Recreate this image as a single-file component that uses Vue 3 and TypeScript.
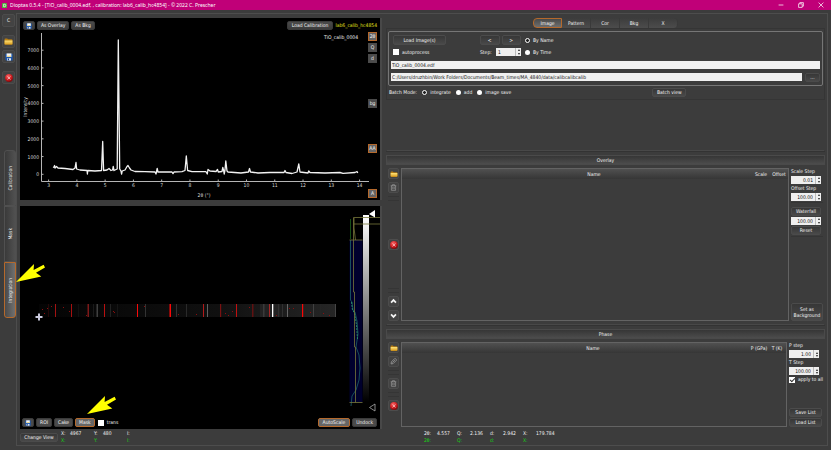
<script setup lang="ts">
import { ref } from 'vue'

const sideTabs = ['Calibration', 'Mask', 'Integration']
const activeSide = ref('Integration')
const tabs = ['Image', 'Pattern', 'Cor', 'Bkg', 'X']
const activeTab = ref('Image')
const unit = ref('2θ')
const navigation = ref('name')
const batchMode = ref('integrate')
const autoprocess = ref(false)
const transparent = ref(false)
const applyToAll = ref(true)
const imageStep = ref('1')
const fileName = ref('TiO_calib_0004.edf')
const folder = ref('C:/Users/druzhbin/Work Folders/Documents/Beam_times/MA_4840/data/calibcalibcalib')
const scaleStep = ref('0.01')
const offsetStep = ref('100.00')
const waterfall = ref('100.00')
const pressureStep = ref('1.00')
const temperatureStep = ref('100.00')

const yTicks = [0, 1000, 2000, 3000, 4000, 5000, 6000, 7000].map((value) => ({
  value,
  y: 156.3 - value * 0.01773,
}))
const xTicks = Array.from({ length: 12 }, (_, i) => ({ value: i + 3, x: 28.6 + i * 28.27 }))

const pattern =
  '33,149.5 34,149 34.6,147.5 35,150 36.5,148.5 38,150 45,150.5 53,151.5 55,150 56,144.5 56.6,151 60,152 67,152.5 67.4,156 67.8,152.5 75,153 81.5,152.5 82.7,123.5 83.6,152.5 87,152 89,150.5 91,152.5 92.6,152 93.2,148.5 94,152.5 97.2,151 98.3,22 99.7,151 101,153 101.6,156 102.2,153 105,152 107,148.5 108,147.5 109.5,150 111,152 115,153.5 125,153.7 135,154 136,156 137.2,150.5 138,154 152,154 153,155.6 154,154 162,153.6 165,152.5 166.3,138 167.6,152.5 172,153.7 186,153.7 187.3,156 188,151.5 190,153 196,153.5 197.5,151.5 198.3,154 202,153.5 202.8,149.5 203.6,152.5 204.2,156 205,152 205.8,143 207,153 208,154 221,155 228.5,154 229.5,150.5 230.5,154 238,155 250,154.5 264,154.5 265,152.5 266,154.5 272,155.5 277,154 278.8,146 280,154 288,155 288.7,153 290,154.5 305,155 320,154.5 323,155.3 335,154.5 337,153.5 337.8,155'

const strip = [
  { x: 28, w: 1, c: '#250808' }, { x: 35, w: 1, c: '#a31212' }, { x: 51, w: 1, c: '#a80f0f' },
  { x: 58, w: 1, c: '#101010' }, { x: 67.5, w: 1.5, c: '#7d1919' }, { x: 73, w: 1, c: '#1a1a1a' },
  { x: 76.5, w: 1.5, c: '#404040' }, { x: 84, w: 1, c: '#b91010' }, { x: 90, w: 1, c: '#222' },
  { x: 97, w: 1, c: '#151515' }, { x: 117, w: 1, c: '#f80a0a' }, { x: 125, w: 1, c: '#333' },
  { x: 149.5, w: 1.5, c: '#fb0707' }, { x: 156, w: 1, c: '#303030' }, { x: 166, w: 1, c: '#2a2a2a' },
  { x: 183, w: 1, c: '#b31919' }, { x: 187, w: 1, c: '#606060' }, { x: 200, w: 1.2, c: '#7a1111' },
  { x: 216, w: 1, c: '#c21010' }, { x: 232, w: 1.5, c: '#601111' }, { x: 243, w: 1.5, c: '#3a3a3a' },
  { x: 249, w: 1, c: '#a32525' }, { x: 252, w: 1.3, c: '#fff' }, { x: 258, w: 1, c: '#303030' },
  { x: 262, w: 1, c: '#303030' }, { x: 267, w: 1, c: '#666' }, { x: 282, w: 1.2, c: '#fb0505' },
  { x: 293, w: 1, c: '#414141' }, { x: 300, w: 1, c: '#252525' }, { x: 315, w: 1, c: '#454545' },
]
const speckles = [
  [22, 103], [24, 107], [27, 102], [31, 100], [43, 101], [49, 105], [66, 109], [94, 106], [93, 105],
  [124, 100], [158, 108], [176, 108], [205, 107], [208, 109], [212, 105], [229, 101], [269, 102],
  [273, 102], [290, 106], [303, 107], [309, 109], [256, 109],
]

const status = [
  { key: 'X:', value: '4967' },
  { key: 'Y:', value: '480' },
  { key: 'I:', value: '' },
]
const readouts = [
  { key: '2θ:', value: '4.557' },
  { key: 'Q:', value: '2.136' },
  { key: 'd:', value: '2.942' },
  { key: 'X:', value: '179.784' },
]
</script>

<template>
  <svg class="defs" width="0" height="0" aria-hidden="true">
    <defs>
      <linearGradient id="gold" x1="0" y1="0" x2="0" y2="1">
        <stop offset="0" stop-color="#ffe37a" /><stop offset="1" stop-color="#d99c1c" />
      </linearGradient>
      <radialGradient id="ruby" cx=".4" cy=".3" r=".75">
        <stop offset="0" stop-color="#ff6a6a" /><stop offset=".6" stop-color="#c81a1e" /><stop offset="1" stop-color="#6d0508" />
      </radialGradient>
      <symbol id="i-folder" viewBox="0 0 20 16">
        <path d="M1 3q0-2 2-2h4l2 2h8q2 0 2 2v8q0 2-2 2H3q-2 0-2-2z" fill="#b67d13" />
        <path d="M1 5.500h18V13q0 2-2 2H3q-2 0-2-2z" fill="url(#gold)" />
      </symbol>
      <symbol id="i-save" viewBox="0 0 20 20">
        <path d="M1 2h18v17H3l-2-2z" fill="#1c56ae" />
        <path d="M4 1h12v9H4z" fill="#f5f5f2" />
        <path d="M5 7h10v2H5z" fill="#e5c24a" />
        <path d="M5 13h10v6H5z" fill="#dbe4f0" />
        <path d="M7 14h3v4H7z" fill="#123a7b" />
      </symbol>
      <symbol id="i-close" viewBox="0 0 20 20">
        <circle cx="10" cy="10" r="9.800" fill="url(#ruby)" />
        <path d="M7 7l6 6M13 7l-6 6" stroke="#f0b4b4" stroke-width="2.200" stroke-linecap="round" />
      </symbol>
      <symbol id="i-trash" viewBox="0 0 20 20">
        <g fill="none" stroke="#9b9b9b" stroke-width="2">
          <path d="M2 5h16M7 5V2h6v3M4 5v13h12V5" /><path d="M8 8v7M12 8v7" />
        </g>
      </symbol>
      <symbol id="i-edit" viewBox="0 0 20 20">
        <g fill="none" stroke="#a6a6a6" stroke-width="2">
          <path d="M3 17l1-6L13 2q2-1 4 1t1 4l-9 9z" /><path d="M7 13l7-7" />
        </g>
      </symbol>
      <symbol id="i-up" viewBox="0 0 20 20"><path d="M3 13l7-7 7 7" fill="none" stroke="#f4f4f4" stroke-width="5" /></symbol>
      <symbol id="i-down" viewBox="0 0 20 20"><path d="M3 7l7 7 7-7" fill="none" stroke="#f4f4f4" stroke-width="5" /></symbol>
      <symbol id="i-arrow" viewBox="0 0 29 19">
        <path d="M0 18L18 0l-.400 6L27.600.700 29 3.400 20 8.700l5.300 3.700z" fill="#ff0" />
      </symbol>
    </defs>
  </svg>

  <div class="window">
    <header class="titlebar">
      <svg class="logo" viewBox="0 0 12 12"><rect width="12" height="12" rx="1" fill="#4fae3c" /><path d="M4 3h2q3 0 3 3t-3 3H4z" fill="none" stroke="#fff" stroke-width="1.800" /></svg>
      <h1>Dioptas 0.5.4 - [TiO_calib_0004.edf, , calibration: lab6_calib_hc4854] - © 2022 C. Prescher</h1>
      <div class="caption">
        <button aria-label="Minimize"><svg viewBox="0 0 10 10"><path d="M1 5h8" /></svg></button>
        <button aria-label="Restore"><svg viewBox="0 0 10 10"><path d="M1 3h6v6H1zM3 3V1h6v6H7" /></svg></button>
        <button aria-label="Close"><svg viewBox="0 0 10 10"><path d="M1 1l8 8M9 1L1 9" /></svg></button>
      </div>
    </header>

    <div class="body">
      <aside class="sidebar">
        <button class="tool">C</button>
        <div class="tool-group">
          <button class="tool" aria-label="Open"><svg class="ico wide"><use href="#i-folder" /></svg></button>
          <button class="tool" aria-label="Save"><svg class="ico"><use href="#i-save" /></svg></button>
        </div>
        <button class="tool" aria-label="Reset"><svg class="ico"><use href="#i-close" /></svg></button>
        <nav class="side-tabs">
          <button v-for="tab in sideTabs" :key="tab" :class="{ active: activeSide === tab }" @click="activeSide = tab">
            <span>{{ tab }}</span>
            <svg v-if="tab === 'Integration'" class="arrow"><use href="#i-arrow" /></svg>
          </button>
        </nav>
      </aside>

      <main class="frame">
        <div class="left">
          <section class="view pattern-view">
            <svg class="canvas" viewBox="0 0 360 182">
              <g stroke="#b5b5b5" stroke-width="1">
                <path d="M21.500 15V163.500H349" fill="none" />
                <path v-for="t in yTicks" :key="t.value" :d="`M21.500 ${t.y}h2`" />
                <path v-for="t in xTicks" :key="t.value" :d="`M${t.x} 163.500v-2`" />
              </g>
              <g class="axis">
                <text v-for="t in yTicks" :key="t.value" x="19" :y="t.y + 2" text-anchor="end">{{ t.value }}</text>
                <text v-for="t in xTicks" :key="t.value" :x="t.x" y="169" text-anchor="middle">{{ t.value }}</text>
                <text x="184" y="179" text-anchor="middle">2θ (°)</text>
                <text transform="translate(7 89) rotate(-90)" text-anchor="middle">Intensity</text>
                <text class="bright" x="338" y="21" text-anchor="end">TiO_calib_0004</text>
              </g>
              <polyline :points="pattern" fill="none" stroke="#f2f2f2" stroke-width="1.300" stroke-linejoin="round" />
            </svg>
            <div class="overlay">
              <div class="bar">
                <button class="btn icon" aria-label="Save pattern"><svg class="ico small"><use href="#i-save" /></svg></button>
                <button class="btn">As Overlay</button>
                <button class="btn">As Bkg</button>
                <span class="grow"></span>
                <button class="btn roomy">Load Calibration</button>
                <span class="calibration">lab6_calib_hc4854</span>
              </div>
              <div class="units">
                <button v-for="u in ['2θ', 'Q', 'd']" :key="u" class="unit" :class="{ on: unit === u }" @click="unit = u">{{ u }}</button>
                <span class="grow"></span>
                <button class="unit">bg</button>
                <span class="grow"></span>
                <button class="unit on">AA</button>
                <span class="grow"></span>
                <button class="unit on">A</button>
              </div>
            </div>
          </section>

          <section class="view image-view">
            <svg class="canvas" viewBox="0 0 360 223">
              <defs>
                <linearGradient id="levels" x1="0" y1="0" x2="0" y2="1"><stop offset="0" stop-color="#fff" /><stop offset="1" stop-color="#000" /></linearGradient>
                <linearGradient id="haze"><stop offset="0" stop-color="#040404" /><stop offset=".6" stop-color="#101010" /><stop offset="1" stop-color="#262626" /></linearGradient>
              </defs>
              <rect x="19" y="98" width="297" height="13" fill="url(#haze)" />
              <rect x="240" y="98" width="20" height="13" fill="#222" />
              <rect v-for="s in strip" :key="s.x" :x="s.x" y="98" :width="s.w" height="13" :fill="s.c" />
              <rect v-for="[x, y] in speckles" :key="`${x}-${y}`" :x="x" :y="y" width="1" height="1" fill="#8c0d0d" />
              <path d="M19 107.500v7M15.500 111h7" stroke="#c9c9dc" stroke-width="2" />
              <rect x="329.500" y="34" width="13" height="162.500" fill="#00002d" />
              <rect x="343" y="9" width="6" height="187" fill="url(#levels)" />
              <g fill="none">
                <path d="M330.500 13v20" stroke="#164f16" />
                <path d="M330.500 34v60l1.500 2 1 8 2 2 2 9 1 13-2 13 3 8 1 13-1 12-3 10-4 6-1 10" stroke="#174e5b" />
                <path d="M331.500 96l1 8 2 3 2 12 1 14" stroke="#288a67" stroke-dasharray="2 1" />
                <path d="M333.500 86V11.500H360M333.500 18H360M333.500 86h1v55h1v55.500M334 12v10l1.500 12M329.500 34h13M329.500 196.500h13" stroke="#77773a" stroke-width=".8" />
              </g>
              <path d="M349 8l6-4v7.500z" fill="#fff" />
              <path d="M349.500 201.500l5.500-3.500v7z" fill="none" stroke="#aaa" stroke-width=".8" />
            </svg>
            <div class="overlay bottom">
              <div class="bar">
                <button class="btn icon" aria-label="Save image"><svg class="ico small"><use href="#i-save" /></svg></button>
                <button class="btn">ROI</button>
                <button class="btn">Cake</button>
                <button class="btn on">Mask<svg class="arrow"><use href="#i-arrow" /></svg></button>
                <label class="choice"><input v-model="transparent" type="checkbox" />trans</label>
                <span class="grow"></span>
                <button class="btn on roomy">AutoScale</button>
                <button class="btn">Undock</button>
              </div>
            </div>
          </section>
        </div>

        <div class="right">
          <section class="control">
            <nav class="tabs">
              <button v-for="tab in tabs" :key="tab" :class="{ active: activeTab === tab }" @click="activeTab = tab">{{ tab }}</button>
            </nav>
            <div class="pane">
              <div class="group">
                <div class="loader">
                  <div class="stack">
                    <button class="dark load">Load Image(s)</button>
                    <label class="choice"><input v-model="autoprocess" type="checkbox" />autoprocess</label>
                  </div>
                  <div class="stack step">
                    <div class="pair"><button class="dark">&lt;</button><button class="dark">&gt;</button></div>
                    <div class="pair">
                      <label for="image-step">Step:</label>
                      <span class="spin"><input id="image-step" v-model="imageStep" class="start" /><i class="steps"></i></span>
                    </div>
                  </div>
                  <div class="stack">
                    <label class="choice"><input v-model="navigation" type="radio" value="name" />By Name</label>
                    <label class="choice"><input v-model="navigation" type="radio" value="time" />By Time</label>
                  </div>
                </div>
                <input v-model="fileName" class="field" aria-label="File name" />
                <div class="path">
                  <input v-model="folder" class="field" aria-label="Folder" />
                  <button class="dark more">...</button>
                </div>
              </div>
              <div class="batch">
                <span>Batch Mode:</span>
                <label class="choice"><input v-model="batchMode" type="radio" value="integrate" />integrate</label>
                <label class="choice"><input v-model="batchMode" type="radio" value="add" />add</label>
                <label class="choice"><input v-model="batchMode" type="radio" value="save" />image save</label>
                <button class="dark view-btn">Batch view</button>
              </div>
            </div>
          </section>

          <section class="list overlay-list">
            <h2>Overlay</h2>
            <div class="content">
              <div class="tools">
                <button class="tool" aria-label="Add overlay"><svg class="ico wide"><use href="#i-folder" /></svg></button>
                <button class="tool" aria-label="Delete overlay"><svg class="ico small"><use href="#i-trash" /></svg></button>
                <hr /><span class="grow"></span>
                <button class="tool" aria-label="Clear overlays"><svg class="ico"><use href="#i-close" /></svg></button>
                <span class="grow"></span><hr />
                <button class="tool" aria-label="Move up"><svg class="ico small"><use href="#i-up" /></svg></button>
                <button class="tool" aria-label="Move down"><svg class="ico small"><use href="#i-down" /></svg></button>
              </div>
              <div class="sheet">
                <table><thead><tr><th class="mark"></th><th>Name</th><th class="num">Scale</th><th class="num">Offset</th></tr></thead></table>
              </div>
              <div class="options">
                <label for="scale-step">Scale Step</label>
                <span class="spin"><input id="scale-step" v-model="scaleStep" /><i class="steps"></i></span>
                <label for="offset-step">Offset Step</label>
                <span class="spin"><input id="offset-step" v-model="offsetStep" /><i class="steps"></i></span>
                <hr />
                <button class="dark">Waterfall</button>
                <span class="spin"><input v-model="waterfall" aria-label="Waterfall" /><i class="steps"></i></span>
                <button class="dark">Reset</button>
                <hr />
                <span class="grow"></span>
                <button class="dark tall">Set as<br />Background</button>
              </div>
            </div>
          </section>

          <section class="list phase-list">
            <h2>Phase</h2>
            <div class="content">
              <div class="tools">
                <button class="tool" aria-label="Add phase"><svg class="ico wide"><use href="#i-folder" /></svg></button>
                <button class="tool" aria-label="Edit phase"><svg class="ico small"><use href="#i-edit" /></svg></button>
                <hr />
                <button class="tool" aria-label="Delete phase"><svg class="ico small"><use href="#i-trash" /></svg></button>
                <hr />
                <button class="tool" aria-label="Clear phases"><svg class="ico"><use href="#i-close" /></svg></button>
              </div>
              <div class="sheet">
                <table><thead><tr><th class="mark"></th><th>Name</th><th class="num">P (GPa)</th><th class="num">T (K)</th></tr></thead></table>
              </div>
              <div class="options">
                <label for="p-step">P step</label>
                <span class="spin"><input id="p-step" v-model="pressureStep" /><i class="steps"></i></span>
                <label for="t-step">T Step</label>
                <span class="spin"><input id="t-step" v-model="temperatureStep" /><i class="steps"></i></span>
                <label class="choice"><input v-model="applyToAll" type="checkbox" />apply to all</label>
                <span class="grow"></span>
                <button class="dark full">Save List</button>
                <button class="dark full">Load List</button>
              </div>
            </div>
          </section>
        </div>

        <div class="status">
          <button class="dark change">Change View</button>
          <div class="cursor">
            <div v-for="s in status" :key="s.key"><b>{{ s.key }}</b><em>{{ s.value }}</em><b class="green">{{ s.key }}</b></div>
          </div>
        </div>
        <div class="status readouts">
          <div class="cursor">
            <div v-for="s in readouts" :key="s.key"><b>{{ s.key }}</b><em>{{ s.value }}</em><b class="green">{{ s.key }}</b></div>
          </div>
        </div>
      </main>
    </div>
  </div>
</template>

<style>
body { margin: 0; background: #3c3c3c; }
</style>

<style scoped>
* { box-sizing: border-box; }
.defs { position: absolute; }
.window {
  display: flex; flex-direction: column; min-height: 100vh;
  background: #3c3c3c; color: #f2f2f2;
  font: 5px/7px 'DejaVu Sans Condensed', 'DejaVu Sans', sans-serif;
}
button, input { font: inherit; color: inherit; margin: 0; padding: 0; border: 0; }
button { cursor: pointer; white-space: nowrap; }
.grow { flex: 1; }
.titlebar { display: flex; align-items: center; gap: 3px; height: 10px; padding: 0 7px 0 2px; background: #c00078; }
.logo { width: 5px; height: 5px; }
h1 { flex: 1; margin: 0; font: 5px/8px 'Noto Sans', sans-serif; color: #fff; white-space: nowrap; }
.caption { display: flex; gap: 14px; }
.caption button { display: flex; width: 6px; background: none; }
.caption svg { width: 6px; height: 6px; fill: none; stroke: #fff; stroke-width: 1.2; }

.body { flex: 1; display: flex; }
.sidebar { display: flex; flex-direction: column; width: 16px; padding: 4px 1px 0 2px; gap: 8px; }
.tool-group { display: flex; flex-direction: column; gap: 2px; }
.tool {
  display: flex; align-items: center; justify-content: center; width: 13px; height: 13px; flex: none;
  border: 1px solid #4c4c4c; border-radius: 2px; background: #434343;
}
.ico { width: 8px; height: 8px; flex: none; }
.ico.wide { width: 9px; height: 7px; }
.ico.small { width: 6px; height: 6px; }
.tools .ico.wide { width: 8px; height: 6px; }
.tools .ico.small { width: 7px; height: 7px; }
.side-tabs { display: flex; flex-direction: column; margin: 58px 0 0 2px; width: 12px; }
.side-tabs button {
  position: relative; display: flex; align-items: center; justify-content: center; height: 56px;
  border: 1px solid #505050; background: linear-gradient(90deg, #3a3a3a, #505050);
}
.side-tabs button:first-child { border-radius: 3px 3px 0 0; }
.side-tabs button:last-child { border-radius: 0 0 3px 3px; }
.side-tabs button.active { border-color: #b5692c; background: linear-gradient(90deg, #4a4a4a, #707070); }
.side-tabs span { writing-mode: vertical-rl; transform: rotate(180deg); }
.arrow { position: absolute; z-index: 2; width: 29px; height: 19px; pointer-events: none; }
.side-tabs .arrow { left: 11px; top: 1px; }
.btn .arrow { left: 11px; bottom: 11px; }

.frame {
  flex: 1; display: grid; grid-template-columns: minmax(0, 360fr) minmax(0, 439fr); grid-template-rows: 1fr auto;
  column-gap: 6px; margin: 3px 3px 4px 0; padding: 4px 2px 0 3px; border: 1px solid #4d4d4d;
}
.left { display: flex; flex-direction: column; gap: 6px; }
.view { display: grid; background: #000; box-shadow: 2px 0 0 #484848; }
.pattern-view { flex: 182 0 0; }
.image-view { flex: 223 0 0; }
.canvas, .overlay { grid-area: 1 / 1; min-width: 0; min-height: 0; }
.canvas { width: 100%; height: 100%; }
.overlay { display: flex; flex-direction: column; padding: 3px 3px 2px; }
.overlay.bottom { justify-content: flex-end; padding: 0 3px 2px 2px; }
.bar { display: flex; align-items: center; gap: 2px; }
.btn {
  position: relative; height: 9px; padding: 0 3px; border: 1px solid #3a3a3a; border-radius: 2px;
  background: linear-gradient(#4a4a4a, #3c3c3c); line-height: 7px;
}
.btn.roomy { padding: 0 4px; }
.btn.icon { padding: 0 2px; display: flex; align-items: center; }
.btn.on, .unit.on { border-color: #b5692c; background: #646464; }
.image-view .bar .btn { background: #4a4a4a; }
.image-view .bar .btn.on { background: #666; }
.calibration { color: #e0e01a; }
.units { flex: 1; display: flex; flex-direction: column; align-items: flex-end; gap: 2px; margin-top: 2px; }
.unit { width: 9px; height: 9px; border: 1px solid #4a4a4a; background: #4c4c4c; line-height: 7px; }
.axis text { font: 5px 'DejaVu Sans Condensed', sans-serif; fill: #dadada; }
.axis .bright { fill: #f2f2f2; }

.right { display: flex; flex-direction: column; }
.control { flex: 136 0 0; }
.tabs { display: flex; justify-content: center; height: 10px; }
.tabs button { width: 29px; background: linear-gradient(#3c3c3c, #4c4c4c); border-right: 1px solid #3a3a3a; }
.tabs button:first-child { border-radius: 4px 0 0 4px; }
.tabs button:last-child { border-radius: 0 4px 4px 0; }
.tabs button.active { border: 1px solid #b5692c; background: linear-gradient(#4a4a4a, #6e6e6e); line-height: 7px; }
.pane { padding: 2px 1px 1px; border: 1px solid #353535; }
.group {
  display: flex; flex-direction: column; gap: 4px; padding: 3px 2px; border: 1px solid #767676; border-radius: 2px;
}
.loader { display: flex; gap: 4px; padding-left: 2px; }
.stack { display: flex; flex-direction: column; gap: 2px; }
.stack > * { height: 10px; }
.step { width: 41px; margin-left: 30px; }
.pair { display: flex; align-items: center; gap: 2px; }
.pair > * { flex: 1; }
.pair label { flex: 0 0 14px; }
.dark {
  height: 9px; border: 1px solid #4b4b4b; border-radius: 2px; background: linear-gradient(#373737, #494949);
  line-height: 7px;
}
.stack .dark { height: 10px; }
.load { width: 53px; }
.choice { display: flex; align-items: center; gap: 3px; white-space: nowrap; }
.bar .choice { margin-left: 1px; }
.choice input { appearance: none; display: grid; place-items: center; width: 6px; height: 6px; background: #fff; flex: none; }
.choice input[type='radio'] { width: 5px; height: 5px; border-radius: 50%; }
.choice input[type='radio']:checked { border: 1px solid #fff; background: #222; }
.choice input[type='checkbox']:checked::after {
  content: ''; width: 2px; height: 4px; border: solid #333; border-width: 0 1px 1px 0; transform: rotate(45deg);
}
.spin { display: flex; height: 8px; background: #efefef; color: #111; }
.spin input { flex: 1; width: 0; padding: 0 2px; background: none; text-align: right; }
.spin input.start { text-align: left; }
.steps { display: flex; flex-direction: column; justify-content: space-evenly; align-items: center; width: 6px; border: 1px solid #bbb; border-width: 0 0 0 1px; }
.steps::before, .steps::after { content: ''; border: 1px solid transparent; }
.steps::before { border-bottom: 2px solid #222; border-top: 0; }
.steps::after { border-top: 2px solid #222; border-bottom: 0; }
.field { height: 8px; padding: 0 1px; background: #f0f0f0; color: #111; width: 100%; min-width: 0; }
.path { display: flex; gap: 3px; }
.more { width: 15px; flex: none; }
.batch { display: flex; align-items: center; gap: 5px; height: 12px; padding-left: 1px; }
.view-btn { width: 34px; margin-left: 136px; }

.list { display: flex; flex-direction: column; border-top: 1px solid #333; padding-top: 3px; box-shadow: 0 -2px 0 -1px #484848; }
.list h2 {
  height: 10px; margin: 0; border: 1px solid #4a4a4a; background: linear-gradient(#363636, #4c4c4c);
  font: inherit; line-height: 8px; text-align: center;
}
.overlay-list { flex: 174 0 0; }
.phase-list { flex: 100 0 0; margin-bottom: 2px; }
.content { flex: 1; display: flex; gap: 2px; padding: 3px 2px 4px; }
.phase-list .content { padding-bottom: 0; }
.tools { display: flex; flex-direction: column; gap: 3px; }
.tools .tool { width: 11px; height: 11px; }
.tools hr, .options hr { width: 100%; height: 5px; margin: 0; border: solid #353535; border-width: 1px 0; }
.sheet { flex: 1; border: 1px solid #636363; }
table { width: 100%; border-spacing: 0; }
th { height: 10px; padding: 0; background: linear-gradient(#505050, #363636); font-weight: 400; text-align: center; }
th.mark { width: 34px; }
th.num { width: 18px; white-space: nowrap; }
.options { display: flex; flex-direction: column; gap: 1px; width: 32px; white-space: nowrap; }
.phase-list .options { width: 34px; }
.options .spin, .options .dark { width: 30px; }
.options hr { height: 1px; margin-bottom: 3px; border-width: 1px 0 0; }
.options .dark.tall { width: 32px; height: 18px; line-height: 6px; }
.options .dark.full { width: 33px; }

.status { display: flex; align-items: center; height: 16px; gap: 3px; }
.change { width: 38px; }
.cursor { display: flex; }
.cursor div { display: grid; grid-template-columns: 9px auto; width: 33px; line-height: 7px; }
b { font-weight: 400; }
em { font-style: normal; }
.cursor .green { color: #14d814; }
.readouts { padding-left: 38px; }
.readouts .cursor div { grid-template-columns: 13px auto; }
</style>
